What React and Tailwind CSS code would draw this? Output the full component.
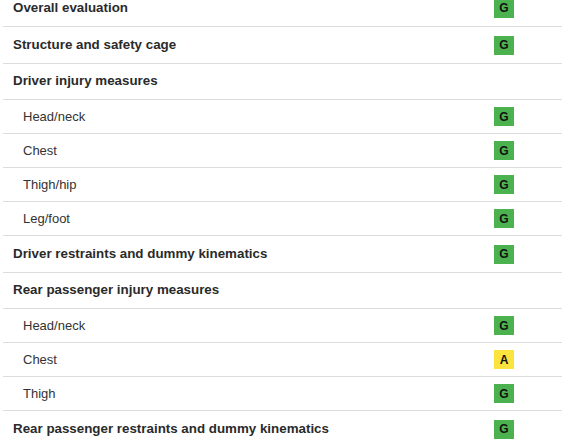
import React from "react";

const rows = [
  { label: "Overall evaluation", head: true, r: "G", h: "h-[37px]" },
  { label: "Structure and safety cage", head: true, r: "G", h: "h-[37px]" },
  { label: "Driver injury measures", head: true, h: "h-[36px]" },
  { label: "Head/neck", r: "G", h: "h-[34px]" },
  { label: "Chest", r: "G", h: "h-[34px]" },
  { label: "Thigh/hip", r: "G", h: "h-[34px]" },
  { label: "Leg/foot", r: "G", h: "h-[34px]" },
  { label: "Driver restraints and dummy kinematics", head: true, r: "G", h: "h-[37px]" },
  { label: "Rear passenger injury measures", head: true, h: "h-[36px]" },
  { label: "Head/neck", r: "G", h: "h-[34px]" },
  { label: "Chest", r: "A", h: "h-[34px]" },
  { label: "Thigh", r: "G", h: "h-[34px]" },
  { label: "Rear passenger restraints and dummy kinematics", head: true, r: "G", h: "h-[37px]" },
];

function Badge({ r }) {
  if (!r) return null;
  const bg = r === "G" ? "bg-[#4cb24f]" : "bg-[#fce43e]";
  return (
    <div className={`w-[20px] h-[19px] ${bg} flex items-center justify-center text-[12px] font-bold text-[#111] leading-none`}>
      {r}
    </div>
  );
}

export default function App() {
  return (
    <div className="w-[562px] h-[447px] overflow-hidden bg-white" style={{ fontFamily: '"Liberation Sans", Arial, sans-serif' }}>
      <div className="-mt-[10px] ml-[3px]">
        {rows.map((row, i) => (
          <div
            key={i}
            className={`flex items-center border-b border-[#dcdcdc] ${row.h}`}
          >
            <div
              className={`flex-1 ${row.head ? "pl-[10px] text-[13.35px] font-bold text-[#2a2a2a]" : "pl-[20px] text-[13px] text-[#333]"}`}
            >
              {row.label}
            </div>
            <div className="w-[68px] flex items-center">
              <Badge r={row.r} />
            </div>
          </div>
        ))}
      </div>
    </div>
  );
}
